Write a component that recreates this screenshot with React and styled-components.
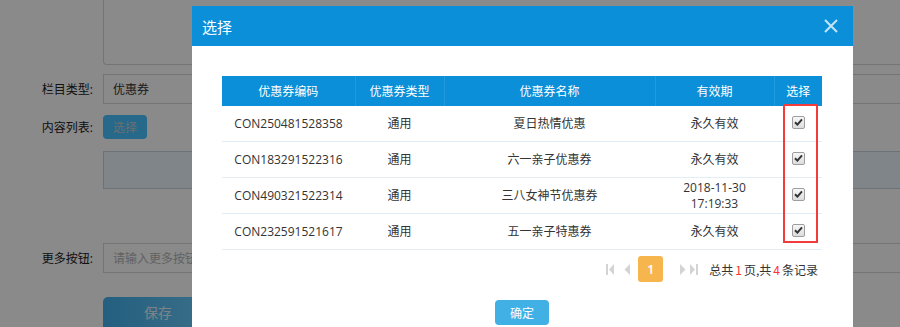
import styled, { createGlobalStyle } from "styled-components";

const GlobalStyle = createGlobalStyle`
  html, body {
    margin: 0;
    padding: 0;
    background: #fff;
  }
  body {
    font-family: "Open Sans", "Noto Sans CJK SC", sans-serif;
    font-size: 12px;
    color: #333;
  }
`;

const Page = styled.div`
  position: relative;
  width: 900px;
  height: 327px;
  overflow: hidden;
  background: #fff;
`;

const Form = styled.div`
  display: grid;
  grid-template-columns: 103px 830px;
  align-items: center;
`;

const Label = styled.div`
  text-align: right;
  padding-right: 10px;
  color: #222;
  margin-top: ${(p) => p.$mt || 0}px;
`;

const Field = styled.div`
  margin-top: ${(p) => p.$mt || 0}px;
`;

const TextArea = styled.div`
  height: 65px;
  box-sizing: border-box;
  border: 1px solid #d6d6d6;
  border-top: none;
  border-radius: 0 0 4px 4px;
`;

const Input = styled.div`
  height: 30px;
  box-sizing: border-box;
  border: 1px solid #d6d6d6;
  padding: 0 9px;
  display: flex;
  align-items: center;
  color: ${(p) => (p.$placeholder ? "#b4b4b4" : "#333")};
`;

const SmallButton = styled.div`
  width: 44px;
  height: 24px;
  border-radius: 4px;
  background: #48c2ff;
  color: #c4ccd2;
  display: flex;
  align-items: center;
  justify-content: center;
`;

const InfoBox = styled.div`
  height: 38px;
  box-sizing: border-box;
  border: 1px solid #c8d4de;
  background: #ebf6fd;
`;

const SaveButton = styled.div`
  width: 110px;
  height: 34px;
  border-radius: 5px;
  background: linear-gradient(90deg, #43b0ed, #6ccdfc);
  color: #e4f2fa;
  font-size: 14px;
  display: flex;
  align-items: center;
  justify-content: center;
  padding-bottom: 4px;
  box-sizing: border-box;
`;

const Overlay = styled.div`
  position: absolute;
  inset: 0;
  background: rgba(0, 0, 0, 0.46);
`;

const Dialog = styled.div`
  position: absolute;
  left: 192px;
  top: 6px;
  width: 661px;
  height: 360px;
  background: #fff;
  display: flex;
  flex-direction: column;
`;

const DialogHeader = styled.div`
  height: 40px;
  background: #0a8fd8;
  color: #fff;
  display: flex;
  align-items: center;
  justify-content: space-between;
  padding: 0 15px 0 10px;
  font-family: "Noto Sans CJK SC", sans-serif;
  font-size: 15px;
`;

const CloseIcon = styled.svg`
  width: 14px;
  height: 14px;
  display: block;
`;

const DialogBody = styled.div`
  padding: 30px 31px 0 30px;
  display: flex;
  flex-direction: column;
`;

const TableWrap = styled.div`
  position: relative;
`;

const Table = styled.table`
  width: 600px;
  border-collapse: collapse;
  table-layout: fixed;
`;

const Th = styled.th`
  background: #0a8fd8;
  color: #fff;
  font-weight: normal;
  height: 30px;
  padding: 0;
  text-align: center;
  border-left: 1px solid rgba(255, 255, 255, 0.1);
  &:first-child {
    border-left: none;
  }
`;

const Td = styled.td`
  height: 35px;
  padding: 0 4px;
  line-height: 16px;
  text-align: center;
  border-bottom: 1px solid #e2edf6;
  color: #333;
`;

const CheckBox = styled.span`
  display: inline-flex;
  align-items: center;
  justify-content: center;
  width: 13px;
  height: 13px;
  box-sizing: border-box;
  border: 1px solid #9e9e9e;
  border-radius: 2px;
  background: linear-gradient(#f8f8f8, #dcdcdc);
  vertical-align: middle;
  margin-top: -4px;
`;

const Highlight = styled.div`
  position: absolute;
  left: 561px;
  top: 28px;
  width: 35px;
  height: 139px;
  box-sizing: border-box;
  border: 2px solid #f23c3c;
`;

const Pager = styled.div`
  display: flex;
  align-items: center;
  justify-content: flex-end;
  margin-top: 6px;
  padding-right: 4px;
  height: 26px;
`;

const PagerIcon = styled.svg`
  width: ${(p) => p.$w}px;
  height: 11px;
  margin-left: ${(p) => p.$ml || 0}px;
  display: block;
`;

const PageNum = styled.div`
  width: 25px;
  height: 26px;
  border-radius: 3px;
  background: #f7b54d;
  color: #fff;
  display: flex;
  align-items: center;
  justify-content: center;
  font-weight: 600;
  font-size: 13px;
  margin-left: 8px;
`;

const PagerText = styled.div`
  margin-left: 11px;
  color: #333;
  font-family: "Noto Sans CJK SC", sans-serif;
  font-size: 12px;
`;

const Red = styled.span`
  color: #f33;
  margin: 0 2px;
`;

const ConfirmButton = styled.div`
  align-self: center;
  margin-top: 18px;
  width: 54px;
  height: 25px;
  border-radius: 4px;
  background: #41b0e4;
  color: #fff;
  display: flex;
  align-items: center;
  justify-content: center;
`;

const rows = [
  { code: "CON250481528358", type: "通用", name: "夏日热情优惠", valid: ["永久有效"] },
  { code: "CON183291522316", type: "通用", name: "六一亲子优惠券", valid: ["永久有效"] },
  { code: "CON490321522314", type: "通用", name: "三八女神节优惠券", valid: ["2018-11-30", "17:19:33"] },
  { code: "CON232591521617", type: "通用", name: "五一亲子特惠券", valid: ["永久有效"] },
];

function Check() {
  return (
    <CheckBox>
      <svg width="9" height="8" viewBox="0 0 9 8">
        <path d="M1 4.2 L3.4 6.6 L8 1.4" fill="none" stroke="#333" strokeWidth="2" />
      </svg>
    </CheckBox>
  );
}

const ICON = "#d4d4d4";

function FirstIcon({ ml }) {
  return (
    <PagerIcon $w={8} $ml={ml} viewBox="0 0 8 11">
      <rect x="0" y="0" width="2" height="11" fill={ICON} />
      <path d="M8 0 L3 5.5 L8 11 Z" fill={ICON} />
    </PagerIcon>
  );
}

function PrevIcon({ ml }) {
  return (
    <PagerIcon $w={6} $ml={ml} viewBox="0 0 6 11">
      <path d="M6 0 L0.5 5.5 L6 11 Z" fill={ICON} />
    </PagerIcon>
  );
}

function NextIcon({ ml }) {
  return (
    <PagerIcon $w={6} $ml={ml} viewBox="0 0 6 11">
      <path d="M0 0 L5.5 5.5 L0 11 Z" fill={ICON} />
    </PagerIcon>
  );
}

function LastIcon({ ml }) {
  return (
    <PagerIcon $w={8} $ml={ml} viewBox="0 0 8 11">
      <path d="M0 0 L5 5.5 L0 11 Z" fill={ICON} />
      <rect x="6" y="0" width="2" height="11" fill={ICON} />
    </PagerIcon>
  );
}

export default function App() {
  return (
    <>
      <GlobalStyle />
      <Page>
        <Form>
          <div />
          <TextArea />
          <Label $mt={9}>栏目类型:</Label>
          <Field $mt={9}>
            <Input>优惠券</Input>
          </Field>
          <Label $mt={11}>内容列表:</Label>
          <Field $mt={11}>
            <SmallButton>选择</SmallButton>
          </Field>
          <div />
          <Field $mt={12}>
            <InfoBox />
          </Field>
          <Label $mt={54}>更多按钮:</Label>
          <Field $mt={54}>
            <Input $placeholder>请输入更多按钮</Input>
          </Field>
          <div />
          <Field $mt={24}>
            <SaveButton>保存</SaveButton>
          </Field>
        </Form>

        <Overlay />

        <Dialog>
          <DialogHeader>
            <span>选择</span>
            <CloseIcon viewBox="0 0 14 14">
              <path d="M1 1 L13 13 M13 1 L1 13" stroke="#c4e5f7" strokeWidth="2" />
            </CloseIcon>
          </DialogHeader>
          <DialogBody>
            <TableWrap>
              <Table>
                <colgroup>
                  <col style={{ width: 133 }} />
                  <col style={{ width: 89 }} />
                  <col style={{ width: 211 }} />
                  <col style={{ width: 119 }} />
                  <col style={{ width: 48 }} />
                </colgroup>
                <thead>
                  <tr>
                    <Th>优惠券编码</Th>
                    <Th>优惠券类型</Th>
                    <Th>优惠券名称</Th>
                    <Th>有效期</Th>
                    <Th>选择</Th>
                  </tr>
                </thead>
                <tbody>
                  {rows.map((r) => (
                    <tr key={r.code}>
                      <Td>{r.code}</Td>
                      <Td>{r.type}</Td>
                      <Td>{r.name}</Td>
                      <Td>
                        {r.valid.map((v) => (
                          <div key={v}>{v}</div>
                        ))}
                      </Td>
                      <Td>
                        <Check />
                      </Td>
                    </tr>
                  ))}
                </tbody>
              </Table>
              <Highlight />
            </TableWrap>

            <Pager>
              <FirstIcon />
              <PrevIcon ml={10} />
              <PageNum>1</PageNum>
              <NextIcon ml={17} />
              <LastIcon ml={4} />
              <PagerText>
                总共<Red>1</Red>页,共<Red>4</Red>条记录
              </PagerText>
            </Pager>

            <ConfirmButton>确定</ConfirmButton>
          </DialogBody>
        </Dialog>
      </Page>
    </>
  );
}
